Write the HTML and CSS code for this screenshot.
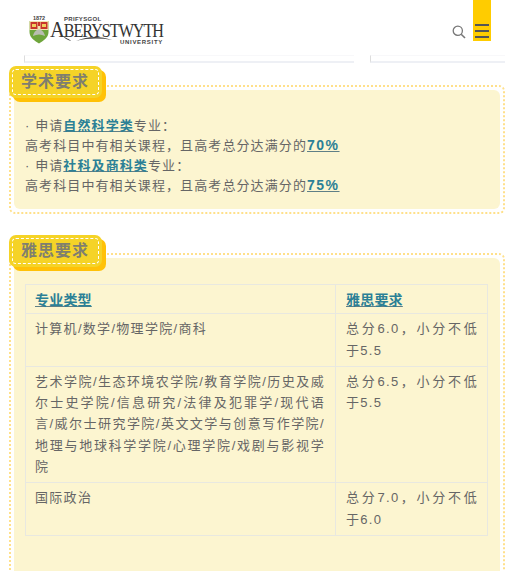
FILE: index.html
```html
<!DOCTYPE html>
<html lang="zh-CN">
  <head>
    <meta charset="UTF-8" />
    <meta name="viewport" content="width=device-width, initial-scale=1.0" />
    <title>Aberystwyth University</title>
    <link rel="stylesheet" href="styles.css">
  </head>
  <body>
    <header class="site-header">
      <div class="logo">
        <svg class="crest" width="20" height="29" viewBox="0 0 20 29">
          <text x="10" y="4.5" text-anchor="middle" class="crest-year">1872</text>
          <path fill="#6fa53c" d="M0.5 6H19.5V17C19.5 23 14 26 10 28.5C6 26 0.5 23 0.5 17Z"></path>
          <path fill="#f3e3b0" d="M0.5 6H19.5V15H0.5Z"></path>
          <path fill="#c8352b" d="M1.5 7H8.5V14H1.5ZM11.5 7H18.5V14H11.5ZM9 7H11V11H9Z"></path>
          <path fill="#f0d060" d="M3 9H7V12H3ZM13 9H17V12H13Z"></path>
          <path fill="#b9bdb0" d="M4 21C5 16 8 14.5 10 14.5C12 14.5 15 16 16 21C12 19 8 19 4 21Z"></path>
        </svg>
        <div class="wordmark">
          <span class="word-top">PRIFYSGOL</span>
          <span class="word-main">ABERYSTWYTH</span>
          <svg class="swoosh" width="64" height="8" viewBox="0 0 64 8">
            <path fill="#444" d="M0 0C2 3 5 5 9 6C8 4 3 3 0 0Z"></path>
            <path fill="#444" d="M14 6C26 1 38 1 50 5C38 3 26 3 14 6Z"></path>
          </svg>
          <span class="word-bottom">UNIVERSITY</span>
        </div>
      </div>
      <div class="header-tools">
        <svg class="search-icon" width="14" height="14" viewBox="0 0 14 14">
          <circle cx="5.8" cy="5.8" r="4.6" fill="none" stroke="#777" stroke-width="1.3"></circle>
          <path d="M9.2 9.2L13 13" stroke="#777" stroke-width="1.6"></path>
        </svg>
        <div class="menu-btn">
          <span></span>
          <span></span>
          <span></span>
        </div>
      </div>
    </header>

    <div class="card-strip">
      <div class="card-edge"></div>
      <div class="card-edge card-edge-right"></div>
    </div>

    <section class="block block-first">
      <h2 class="badge"><span>学术要求</span></h2>
      <div class="block-inner">
        <p>· 申请<a href="#">自然科学类</a>专业：</p>
        <p>高考科目中有相关课程，且高考总分达满分的<a class="score" href="#">70%</a></p>
        <p>· 申请<a href="#">社科及商科类</a>专业：</p>
        <p>高考科目中有相关课程，且高考总分达满分的<a class="score" href="#">75%</a></p>
      </div>
    </section>

    <section class="block block-second">
      <h2 class="badge"><span>雅思要求</span></h2>
      <div class="block-inner">
        <table class="req-table">
          <tr>
            <th><a href="#">专业类型</a></th>
            <th><a href="#">雅思要求</a></th>
          </tr>
          <tr>
            <td>计算机/数学/物理学院/商科</td>
            <td>总分6.0，小分不低于5.5</td>
          </tr>
          <tr>
            <td>艺术学院/生态环境农学院/教育学院/历史及威尔士史学院/信息研究/法律及犯罪学/现代语言/威尔士研究学院/英文文学与创意写作学院/地理与地球科学学院/心理学院/戏剧与影视学院</td>
            <td>总分6.5，小分不低于5.5</td>
          </tr>
          <tr>
            <td>国际政治</td>
            <td>总分7.0，小分不低于6.0</td>
          </tr>
        </table>
      </div>
    </section>
  </body>
</html>
```

FILE: styles.css
```css
html,
body {
  height: 571px;
  overflow: hidden;
}

body {
  font-family: "Liberation Sans", "Noto Sans CJK SC", sans-serif;
  margin: 0;
  padding: 0;
  color: #666;
  background-color: white;
}

a {
  color: #2b8096;
  font-weight: bold;
  text-decoration: underline;
  text-decoration-color: #5f7f86;
}

/* Header */
.site-header {
  height: 55px;
  display: flex;
  justify-content: space-between;
  align-items: flex-start;
  padding: 0 14px 0 29px;
  box-sizing: border-box;
}

.logo {
  display: flex;
  align-items: flex-start;
  gap: 1px;
  padding-top: 15px;
}

.crest-year {
  font-size: 5.5px;
  font-weight: bold;
  fill: #444;
}

.wordmark {
  position: relative;
  width: 113px;
  height: 30px;
  color: #333;
}

.word-top {
  position: absolute;
  top: 1px;
  left: 14px;
  font-size: 6px;
  line-height: 6px;
  font-weight: bold;
  letter-spacing: 0.3px;
  color: #444;
}

.word-main {
  position: absolute;
  top: 7px;
  left: 0;
  font-family: "Liberation Serif", serif;
  font-size: 19px;
  line-height: 14px;
  letter-spacing: -1.2px;
  white-space: nowrap;
  transform: scaleX(0.85);
  transform-origin: left center;
}

.word-main::first-letter {
  font-size: 24px;
}

.swoosh {
  position: absolute;
  top: 20px;
  left: 12px;
}

.word-bottom {
  position: absolute;
  top: 24px;
  right: 0;
  font-size: 6px;
  line-height: 6px;
  font-weight: bold;
  letter-spacing: 0.7px;
  color: #444;
}

.header-tools {
  display: flex;
  align-items: flex-start;
  gap: 7px;
}

.search-icon {
  margin-top: 25px;
}

.menu-btn {
  width: 18px;
  height: 41px;
  background-color: #ffcc00;
  display: flex;
  flex-direction: column;
  justify-content: flex-end;
  align-items: center;
  gap: 4px;
  padding-bottom: 3px;
  box-sizing: border-box;
}

.menu-btn span {
  width: 14px;
  height: 2px;
  background-color: #555;
}

/* Cut off cards under the header */
.card-strip {
  height: 8px;
  display: flex;
  padding-left: 24px;
  gap: 16px;
}

.card-edge {
  width: 330px;
  border-left: 1px solid #ddd;
  border-top: 1px solid #f8f8fa;
  border-bottom: 2px solid #eef0f5;
  box-sizing: border-box;
}

.card-edge-right {
  flex: 1;
}

/* Dotted blocks */
.block {
  position: relative;
  margin-left: 9px;
  padding: 3px;
  border: 2px dotted #ffe08a;
  border-radius: 6px;
}

.block-first {
  margin-top: 22px;
}

.block-second {
  margin-top: 39px;
  height: 400px;
}

.block-inner {
  background-color: #fcf5d0;
  border-radius: 6px;
  padding: 26px 12px 13px 11px;
}

.block-second .block-inner {
  height: 100%;
  box-sizing: border-box;
}

.block-inner p {
  margin: 0;
  font-size: 13px;
  line-height: 20px;
  letter-spacing: 1.1px;
}

.score {
  font-size: 14px;
  line-height: 0;
  letter-spacing: 1.5px;
}

.badge {
  position: absolute;
  top: -21px;
  left: -2px;
  margin: 0;
  padding: 3px;
  background-color: #f5d327;
  border-radius: 7px;
  box-shadow: 4px 4px 0 #ffc107;
}

.block-second .badge {
  top: -20px;
}

.badge span {
  display: block;
  width: 87px;
  height: 26px;
  box-sizing: border-box;
  padding-left: 8px;
  border: 1px dashed #fff;
  border-radius: 4px;
  font-size: 16px;
  font-weight: bold;
  line-height: 24px;
  letter-spacing: 1px;
  color: #7f7f6f;
}

/* Requirements table */
.req-table {
  width: 463px;
  border-collapse: collapse;
  table-layout: fixed;
}

.req-table th,
.req-table td {
  border: 1px solid #e8e8e0;
  text-align: justify;
  vertical-align: top;
  padding: 4px 10px 5px 9px;
  font-size: 13px;
  line-height: 21.3px;
  letter-spacing: 1.3px;
}

.req-table th {
  font-size: 14px;
  letter-spacing: 0.2px;
  padding: 5px 10px 2px 9px;
}

.req-table th + th,
.req-table td + td {
  padding-left: 10px;
  padding-right: 9px;
}

.req-table th:first-child,
.req-table td:first-child {
  width: 290px;
}
```
